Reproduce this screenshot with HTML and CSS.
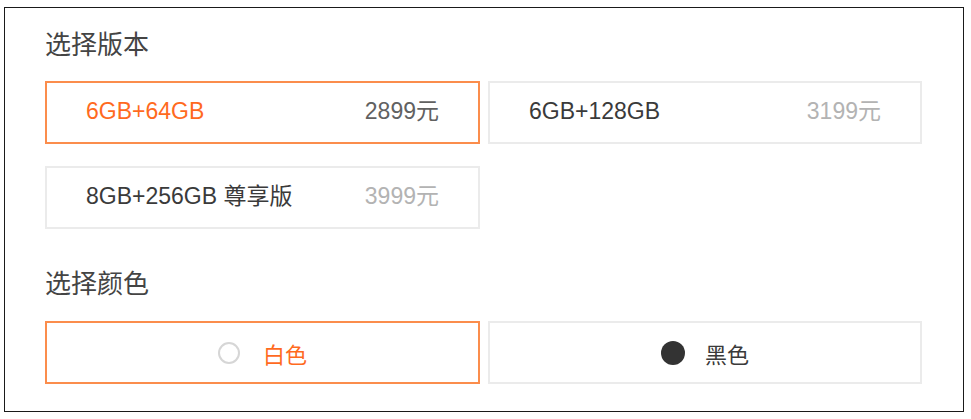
FILE: index.html
```html
<!DOCTYPE html>
<html lang="zh-CN">
<head>
<meta charset="utf-8">
<title>选择版本</title>
<link rel="stylesheet" href="styles.css">
</head>
<body>
<div class="panel">
  <h2 class="title">选择版本</h2>
  <div class="grid">
    <div class="opt active"><span class="name">6GB+64GB</span><span class="price">2899元</span></div>
    <div class="opt"><span class="name">6GB+128GB</span><span class="price">3199元</span></div>
    <div class="opt"><span class="name">8GB+256GB 尊享版</span><span class="price">3999元</span></div>
  </div>
  <h2 class="title title2">选择颜色</h2>
  <div class="grid">
    <div class="opt color active"><span class="dot dot-white"></span><span class="cname">白色</span></div>
    <div class="opt color"><span class="dot dot-black"></span><span class="cname">黑色</span></div>
  </div>
</div>
</body>
</html>
```

FILE: styles.css
```css
html, body {
  margin: 0;
  padding: 0;
  background: #fff;
}
body {
  font-family: "Liberation Sans", "Noto Sans CJK SC", sans-serif;
  color: #333;
}
.panel {
  box-sizing: border-box;
  margin: 7px 0 0 4px;
  width: 960px;
  height: 405px;
  border: 1px solid #1a1a1a;
  padding: 19px 41px 0 40px;
}
.title {
  margin: 0;
  font-family: "Noto Sans CJK SC", sans-serif;
  font-weight: 400;
  font-size: 26px;
  line-height: 32px;
  color: #444;
}
.title2 {
  margin-top: 37px;
}
.grid {
  margin-top: 22px;
  display: grid;
  grid-template-columns: 435px 434px;
  column-gap: 8px;
  row-gap: 22px;
}
.title2 + .grid {
  margin-top: 23px;
}
.opt {
  box-sizing: border-box;
  height: 63px;
  border: 2px solid #ebebeb;
  display: flex;
  align-items: center;
  justify-content: space-between;
  padding: 0 39px 2px 39px;
  font-size: 23px;
  line-height: 57px;
  color: #3a3a3a;
}
.opt.active {
  border-color: #fb8d4c;
}
.opt.active .name,
.opt.active .cname {
  color: #ff6a1e;
}
.price {
  color: #b3b3b3;
}
.opt.active .price {
  color: #616161;
}
.opt.color {
  justify-content: center;
  gap: 23px;
  padding-bottom: 0;
}
.dot {
  box-sizing: border-box;
  width: 22px;
  height: 22px;
  border-radius: 50%;
}
.dot-white {
  border: 2px solid #d6d6d6;
  background: #fff;
}
.dot-black {
  width: 24px;
  height: 24px;
  background: #333;
  margin-right: -3px;
}
.cname {
  font-family: "Noto Sans CJK SC", sans-serif;
  font-size: 22px;
  line-height: 30px;
}
```
